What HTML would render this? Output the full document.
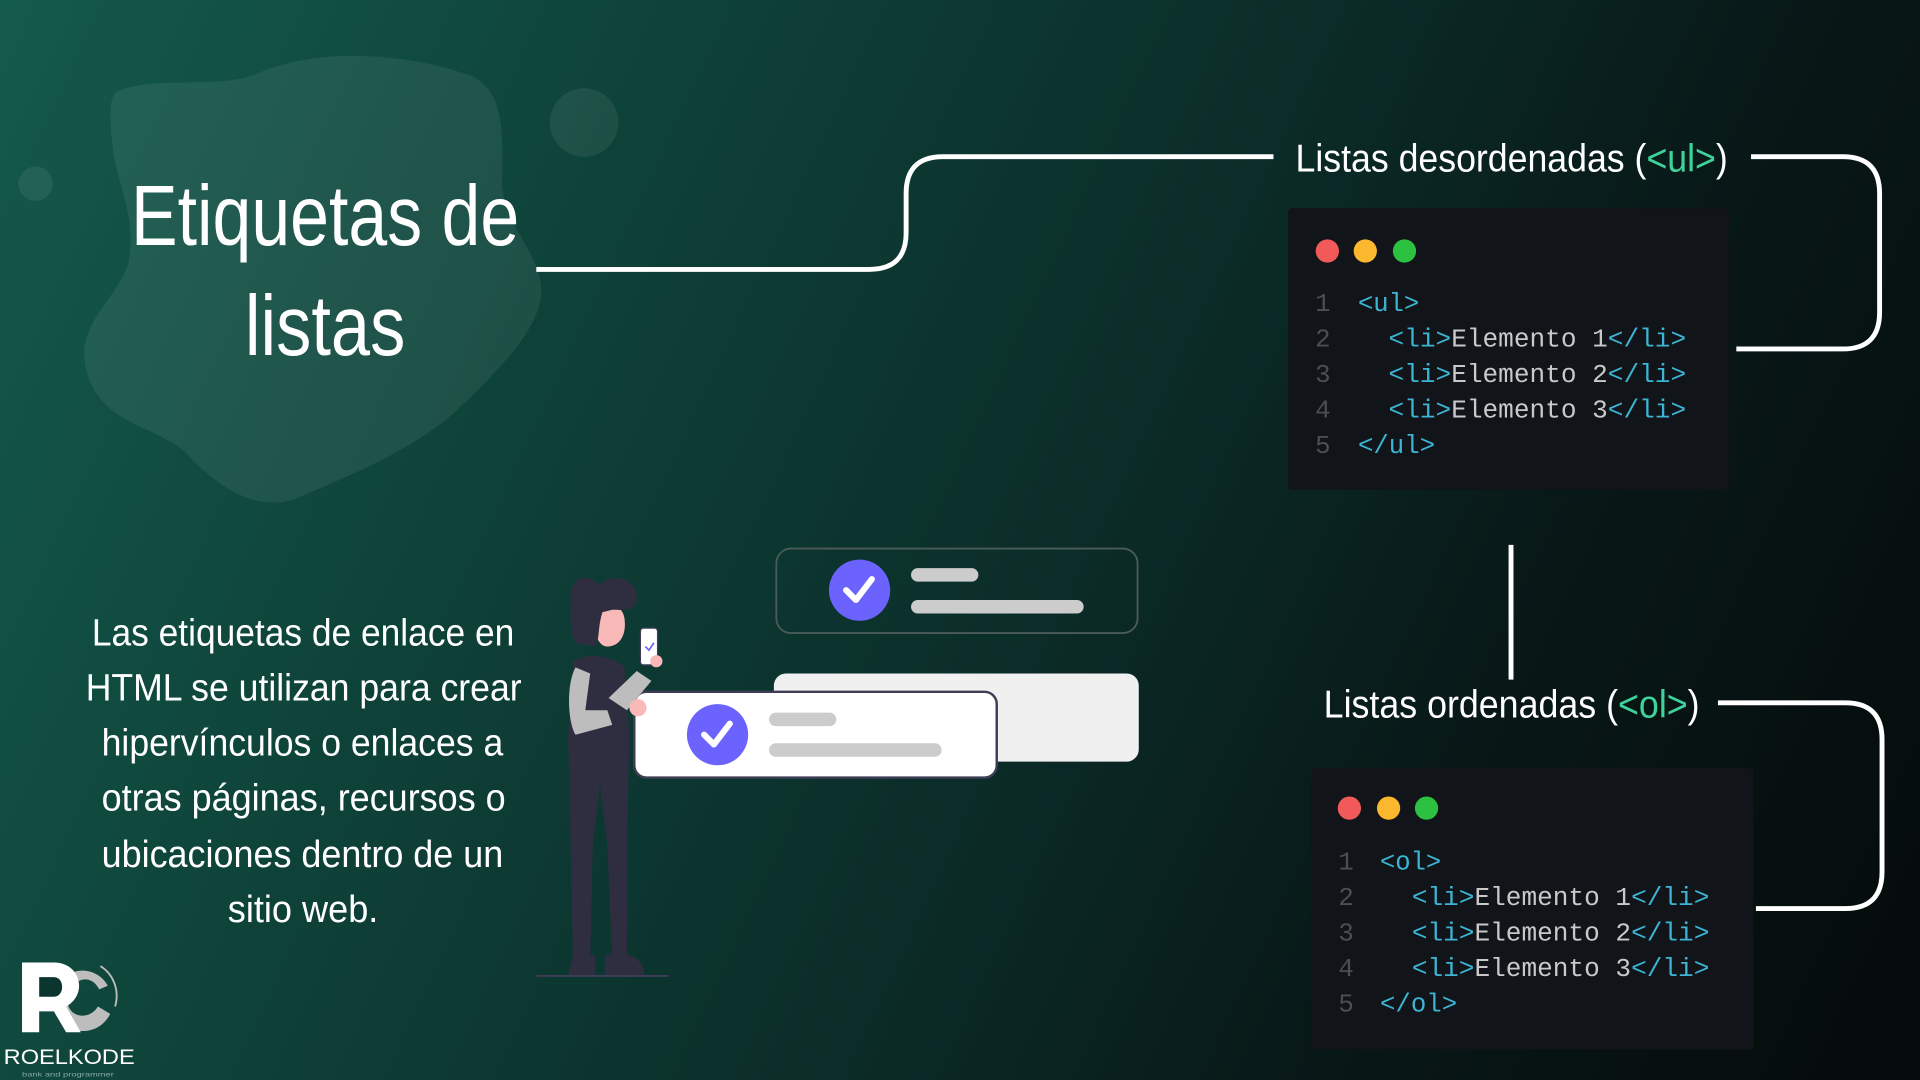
<!DOCTYPE html>
<html><head><meta charset="utf-8"><style>
html,body{margin:0;padding:0;width:1920px;height:1080px;overflow:hidden;}
body{background:linear-gradient(115deg,#145a4c 0%,#0e4138 30%,#0b2c28 55%,#081817 75%,#050a0a 100%);}
svg{display:block;}
text{font-family:"Liberation Sans Narrow","Liberation Sans",sans-serif;}
.m text{font-family:"Liberation Mono","DejaVu Sans Mono",monospace;font-size:21px;}
</style></head><body>
<svg width="1920" height="1080" viewBox="0 0 1568 882" xmlns="http://www.w3.org/2000/svg">
<!-- blobs -->
<path d="M95,75 C130,60 180,75 215,58 C260,40 330,42 385,62 C415,75 410,120 410,150 C412,185 440,205 442,235 C444,265 410,300 370,338 C330,372 280,390 240,408 C205,418 175,395 150,368 C120,345 80,345 70,300 C62,265 95,245 105,215 C112,175 95,150 92,120 C90,100 88,82 95,75 Z" fill="#ffffff" fill-opacity="0.07"/>
<circle cx="477" cy="100" r="28" fill="#ffffff" fill-opacity="0.07"/>
<circle cx="29" cy="150" r="14" fill="#ffffff" fill-opacity="0.07"/>

<!-- title -->
<text x="107" y="200" font-size="70" fill="#fff" textLength="317" lengthAdjust="spacingAndGlyphs">Etiquetas de</text>
<text x="200" y="290" font-size="70" fill="#fff" textLength="131" lengthAdjust="spacingAndGlyphs">listas</text>

<!-- paragraph -->
<g font-size="31" fill="#fff">
<text x="75" y="527" textLength="345" lengthAdjust="spacingAndGlyphs">Las etiquetas de enlace en</text>
<text x="70" y="572" textLength="356" lengthAdjust="spacingAndGlyphs">HTML se utilizan para crear</text>
<text x="83" y="617" textLength="328" lengthAdjust="spacingAndGlyphs">hipervínculos o enlaces a</text>
<text x="83" y="662" textLength="330" lengthAdjust="spacingAndGlyphs">otras páginas, recursos o</text>
<text x="83" y="708" textLength="328" lengthAdjust="spacingAndGlyphs">ubicaciones dentro de un</text>
<text x="186" y="753" textLength="123" lengthAdjust="spacingAndGlyphs">sitio web.</text>
</g>

<!-- connectors -->
<g fill="none" stroke="#fff" stroke-width="4">
<path d="M438,220 H710 Q740,220 740,190 V158 Q740,128 770,128 H1040"/>
<path d="M1430,128 H1505 Q1535,128 1535,158 V255 Q1535,285 1505,285 H1418"/>
<path d="M1234,445 V555"/>
<path d="M1403,574 H1507 Q1537,574 1537,604 V712 Q1537,742 1507,742 H1434"/>
</g>

<!-- labels -->
<text x="1058" y="140" font-size="32" fill="#fff" textLength="353" lengthAdjust="spacingAndGlyphs">Listas desordenadas (<tspan fill="#3ed39b">&lt;ul&gt;</tspan>)</text>
<text x="1081" y="586" font-size="32" fill="#fff" textLength="307" lengthAdjust="spacingAndGlyphs">Listas ordenadas (<tspan fill="#3ed39b">&lt;ol&gt;</tspan>)</text>

<!-- code box 1 -->
<rect x="1052" y="170" width="360" height="230" rx="3" fill="#111418"/>
<circle cx="1084" cy="205" r="9.5" fill="#f25a5a"/>
<circle cx="1115" cy="205" r="9.5" fill="#fbb72d"/>
<circle cx="1147" cy="205" r="9.5" fill="#2cc140"/>
<g class="m">
<text x="1074" y="254" fill="#4a4f55">1</text><text x="1109" y="254" fill="#3cb4d4" textLength="50" lengthAdjust="spacingAndGlyphs">&lt;ul&gt;</text>
<text x="1074" y="283" fill="#4a4f55">2</text><text x="1134" y="283" fill="#3cb4d4" textLength="243" lengthAdjust="spacingAndGlyphs">&lt;li&gt;<tspan fill="#c9c9c9">Elemento 1</tspan>&lt;/li&gt;</text>
<text x="1074" y="312" fill="#4a4f55">3</text><text x="1134" y="312" fill="#3cb4d4" textLength="243" lengthAdjust="spacingAndGlyphs">&lt;li&gt;<tspan fill="#c9c9c9">Elemento 2</tspan>&lt;/li&gt;</text>
<text x="1074" y="341" fill="#4a4f55">4</text><text x="1134" y="341" fill="#3cb4d4" textLength="243" lengthAdjust="spacingAndGlyphs">&lt;li&gt;<tspan fill="#c9c9c9">Elemento 3</tspan>&lt;/li&gt;</text>
<text x="1074" y="370" fill="#4a4f55">5</text><text x="1109" y="370" fill="#3cb4d4" textLength="63" lengthAdjust="spacingAndGlyphs">&lt;/ul&gt;</text>
</g>

<!-- code box 2 -->
<rect x="1071" y="627" width="361" height="230" rx="3" fill="#111418"/>
<circle cx="1102" cy="660" r="9.5" fill="#f25a5a"/>
<circle cx="1134" cy="660" r="9.5" fill="#fbb72d"/>
<circle cx="1165" cy="660" r="9.5" fill="#2cc140"/>
<g class="m">
<text x="1093" y="710" fill="#4a4f55">1</text><text x="1127" y="710" fill="#3cb4d4" textLength="50" lengthAdjust="spacingAndGlyphs">&lt;ol&gt;</text>
<text x="1093" y="739" fill="#4a4f55">2</text><text x="1153" y="739" fill="#3cb4d4" textLength="243" lengthAdjust="spacingAndGlyphs">&lt;li&gt;<tspan fill="#c9c9c9">Elemento 1</tspan>&lt;/li&gt;</text>
<text x="1093" y="768" fill="#4a4f55">3</text><text x="1153" y="768" fill="#3cb4d4" textLength="243" lengthAdjust="spacingAndGlyphs">&lt;li&gt;<tspan fill="#c9c9c9">Elemento 2</tspan>&lt;/li&gt;</text>
<text x="1093" y="797" fill="#4a4f55">4</text><text x="1153" y="797" fill="#3cb4d4" textLength="243" lengthAdjust="spacingAndGlyphs">&lt;li&gt;<tspan fill="#c9c9c9">Elemento 3</tspan>&lt;/li&gt;</text>
<text x="1093" y="826" fill="#4a4f55">5</text><text x="1127" y="826" fill="#3cb4d4" textLength="63" lengthAdjust="spacingAndGlyphs">&lt;/ol&gt;</text>
</g>

<!-- illustration cards -->
<rect x="634" y="448" width="295" height="69" rx="12" fill="none" stroke="#4b5b59" stroke-width="1.5"/>
<ellipse cx="702" cy="482" rx="25" ry="25" fill="#6c63ff"/>
<path d="M691,482 L699,490 L712,473" fill="none" stroke="#fff" stroke-width="5" stroke-linecap="round" stroke-linejoin="round"/>
<rect x="744" y="464" width="55" height="11" rx="5.5" fill="#cccccc"/>
<rect x="744" y="490" width="141" height="11" rx="5.5" fill="#cccccc"/>

<rect x="632" y="550" width="298" height="72" rx="10" fill="#f0f0f0"/>
<rect x="518" y="565" width="296" height="70" rx="10" fill="#fff" stroke="#3f3d56" stroke-width="2"/>
<ellipse cx="586" cy="600" rx="25" ry="25" fill="#6c63ff"/>
<path d="M575,600 L583,608 L596,591" fill="none" stroke="#fff" stroke-width="5" stroke-linecap="round" stroke-linejoin="round"/>
<rect x="628" y="582" width="55" height="11" rx="5.5" fill="#cccccc"/>
<rect x="628" y="607" width="141" height="11" rx="5.5" fill="#cccccc"/>

<!-- person -->
<path d="M468,540 C480,533 500,535 510,545 L514,600 L512,690 L512,785 L500,785 L496,690 L490,640 L484,690 L482,785 L468,785 L466,690 L464,600 Z" fill="#2f2e41"/>
<path d="M468,780 h18 v17 h-22 Z M494,780 h20 q12,4 12,17 h-32 Z" fill="#2f2e41"/>
<path d="M470,545 C462,560 464,590 470,600 L500,592 L496,580 L478,580 L482,550 Z" fill="#bdbdbd"/>
<path d="M497,570 L520,548 L532,556 L512,580 Z" fill="#bdbdbd"/>
<circle cx="521" cy="578" r="7" fill="#f9b9b9"/>
<rect x="523" y="513" width="14" height="30" rx="2.5" fill="#fff" stroke="#3f3d56" stroke-width="1"/>
<path d="M527,528 l3,3 l4,-6" stroke="#6c63ff" stroke-width="1.4" fill="none"/>
<circle cx="536" cy="540" r="5" fill="#f9b9b9"/>
<path d="M484,500 C486,490 508,490 510,505 C512,520 505,528 496,528 C488,528 484,515 484,500 Z" fill="#f9b9b9"/>
<path d="M466,490 C464,472 480,466 490,478 C496,468 520,470 520,488 C520,500 508,498 500,498 L492,500 C488,512 490,522 486,528 L470,525 C465,515 466,500 466,490 Z" fill="#2f2e41"/>
<path d="M438,797 H546" stroke="#3f3d56" stroke-width="1.5"/>

<!-- logo -->
<path d="M88,805 C80,790 58,788 48,803 C38,818 48,842 68,842 C78,842 86,836 90,828 L80,822 C74,832 60,832 56,822 C52,810 62,798 72,800 C76,801 79,804 81,808 Z" fill="#bdbdbd"/>
<path d="M82,789 C92,795 98,808 94,822" stroke="#bdbdbd" stroke-width="1.5" fill="none"/>
<path d="M18,786 H44 C66,786 72,812 54,822 L66,843 H54 L44,826 H32 V843 H18 Z" fill="#fff"/>
<path d="M32,798 V814 H44 C53,814 53,798 44,798 Z" fill="#0c3530"/>
<text x="3" y="869" font-size="17" fill="#fff" textLength="107" lengthAdjust="spacingAndGlyphs" style="font-family:'Liberation Sans',sans-serif">ROELKODE</text>
<text x="18" y="879" font-size="5" fill="#8aa" textLength="75" lengthAdjust="spacingAndGlyphs">bank and programmer</text>
</svg>
</body></html>
